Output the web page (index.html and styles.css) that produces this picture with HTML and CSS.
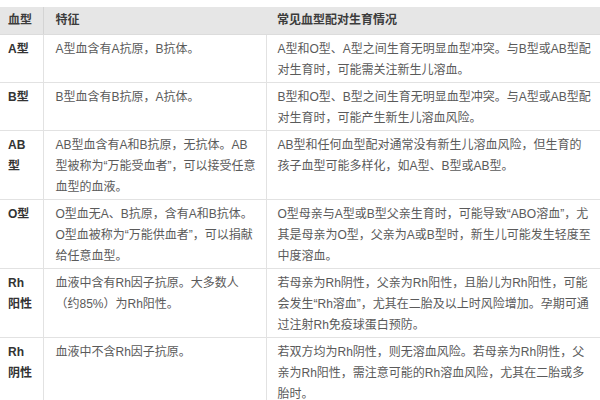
FILE: index.html
```html
<!DOCTYPE html>
<html lang="zh">
<head>
<meta charset="utf-8">
<link rel="stylesheet" href="styles.css">
</head>
<body>
<table class="blood">
  <colgroup>
    <col class="c-type">
    <col class="c-feat">
    <col class="c-pair">
  </colgroup>
  <thead>
    <tr>
      <th class="type">血型</th>
      <th class="feat">特征</th>
      <th class="pair">常见血型配对生育情况</th>
    </tr>
  </thead>
  <tbody>
    <tr>
      <td class="type">A型</td>
      <td class="feat">A型血含有A抗原，B抗体。</td>
      <td class="pair">A型和O型、A型之间生育无明显血型冲突。与B型或AB型配对生育时，可能需关注新生儿溶血。</td>
    </tr>
    <tr>
      <td class="type">B型</td>
      <td class="feat">B型血含有B抗原，A抗体。</td>
      <td class="pair">B型和O型、B型之间生育无明显血型冲突。与A型或AB型配对生育时，可能产生新生儿溶血风险。</td>
    </tr>
    <tr>
      <td class="type">AB型</td>
      <td class="feat">AB型血含有A和B抗原，无抗体。AB<br>型被称为“万能受血者”，可以接受任意<br>血型的血液。</td>
      <td class="pair">AB型和任何血型配对通常没有新生儿溶血风险，但生育的孩子血型可能多样化，如A型、B型或AB型。</td>
    </tr>
    <tr>
      <td class="type">O型</td>
      <td class="feat">O型血无A、B抗原，含有A和B抗体。<br>O型血被称为“万能供血者”，可以捐献给任意血型。</td>
      <td class="pair">O型母亲与A型或B型父亲生育时，可能导致“ABO溶血”，尤其是母亲为O型，父亲为A或B型时，新生儿可能发生轻度至中度溶血。</td>
    </tr>
    <tr>
      <td class="type">Rh阳性</td>
      <td class="feat">血液中含有Rh因子抗原。大多数人<br>（约85%）为Rh阳性。</td>
      <td class="pair">若母亲为Rh阴性，父亲为Rh阳性，且胎儿为Rh阳性，可能会发生“Rh溶血”，尤其在二胎及以上时风险增加。孕期可通过注射Rh免疫球蛋白预防。</td>
    </tr>
    <tr>
      <td class="type">Rh阴性</td>
      <td class="feat">血液中不含Rh因子抗原。</td>
      <td class="pair">若双方均为Rh阴性，则无溶血风险。若母亲为Rh阴性，父亲为Rh阳性，需注意可能的Rh溶血风险，尤其在二胎或多胎时。</td>
    </tr>
  </tbody>
</table>
</body>
</html>
```

FILE: styles.css
```css
html, body {
  margin: 0;
  padding: 0;
  background: #ffffff;
}
body {
  width: 600px;
  height: 400px;
  overflow: hidden;
  font-family: "Liberation Sans", "Noto Sans CJK SC", sans-serif;
  font-size: 12px;
  color: #5a5a5a;
}
.blood {
  margin-top: 7px;
  width: 600px;
  table-layout: fixed;
  border-collapse: collapse;
}
.c-type { width: 43px; }
.c-feat { width: 223px; }
.c-pair { width: 334px; }

.blood th {
  background: #e6e6e6;
  color: #3c3c3c;
  font-weight: bold;
  text-align: left;
  height: 27px;
  padding: 0 6px 0 11px;
  line-height: 27px;
  white-space: nowrap;
  border-bottom: 1px solid #dcdcdc;
}
.blood th.type {
  padding-left: 8px;
  padding-right: 4px;
  border-right: 1px solid #d4d4d4;
}
.blood th.feat {
  padding-left: 12px;
}
.blood td {
  vertical-align: top;
  line-height: 21px;
  padding: 4px 11px 1px 11px;
  border-bottom: 1px solid #e2e2e2;
}
.blood td.type {
  padding-left: 8px;
  padding-right: 10px;
  font-weight: bold;
  color: #333333;
  border-right: 1px solid #e2e2e2;
}
.blood td.feat {
  padding-left: 12px;
  padding-right: 5px;
  border-right: 1px solid #e2e2e2;
}
.blood td.pair {
  padding-right: 8px;
}
```
